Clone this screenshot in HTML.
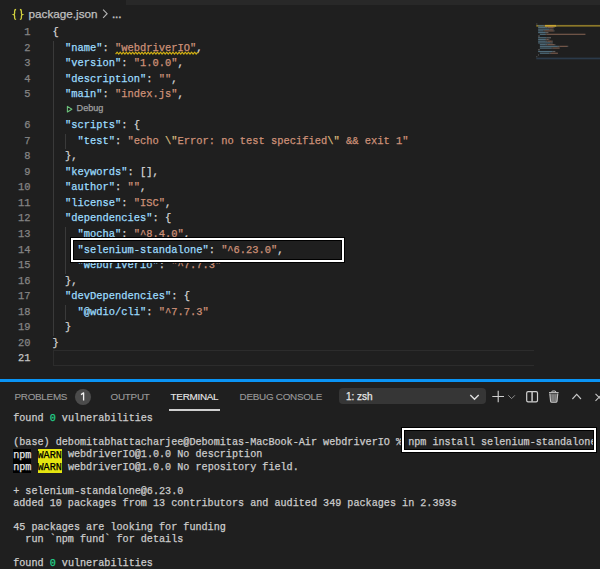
<!DOCTYPE html>
<html><head><meta charset="utf-8">
<style>
html,body{margin:0;padding:0;}
.code,.ln,.tl,#bc,.cl,#dd span{-webkit-text-stroke:0.25px currentColor;}
.tab{-webkit-text-stroke:0.12px currentColor;}
body{width:600px;height:569px;overflow:hidden;background:#1f1f1f;position:relative;font-family:"Liberation Sans",sans-serif;}
.abs{position:absolute;}
#tabstrip{position:absolute;left:125.5px;top:0;width:474.5px;height:4.5px;background:#282828;}
#bc{position:absolute;left:12px;top:6px;height:16px;line-height:16px;font-size:11.7px;color:#c0c0c0;white-space:nowrap;}
.bci{position:absolute;top:6px;height:16px;line-height:16px;font-size:11.6px;color:#cfcf45;font-family:"Liberation Sans",sans-serif;-webkit-text-stroke:0.4px currentColor;}
#bc .ic{color:#cbcb41;font-family:"Liberation Mono",monospace;font-size:11px;letter-spacing:-1px;}
.ln,.code,.cl{position:absolute;height:15.54px;line-height:15.54px;white-space:pre;}
.ln{left:0;width:30.5px;text-align:right;font-family:"Liberation Mono",monospace;font-size:10.42px;color:#858585;}
.ln.act{color:#c6c6c6;}
.code{left:52.5px;font-family:"Liberation Mono",monospace;font-size:10.42px;color:#d4d4d4;}
.k{color:#9cdcfe;}
.s{color:#ce9178;}
.p{color:#d4d4d4;}
.e{color:#d7ba7d;}

.cl{left:76.6px;font-size:9.1px;color:#a0a0a0;}
.tri{display:inline-block;width:0;height:0;border-left:5px solid #89d185;border-top:3px solid transparent;border-bottom:3px solid transparent;margin-right:4px;vertical-align:-1px;}
.guide{position:absolute;width:1px;background:#3a3a3a;}
#curline{position:absolute;left:52.5px;top:350.4px;width:490px;height:15.5px;box-sizing:border-box;border:1px solid #2c2c2c;border-right:none;}
#mmbg{position:absolute;left:533.5px;top:23px;width:66.5px;height:356px;background:#1f1f1f;}
#box1{position:absolute;left:70.7px;top:237.5px;width:273.8px;height:24.7px;box-sizing:border-box;border:2.5px solid #fff;box-shadow:inset 0 0 0 1px #000, 0 0 0 1px #000;}
#blue{position:absolute;left:0;top:379px;width:600px;height:3px;background:#0a94f5;}
.tab{position:absolute;top:389px;height:16px;line-height:16px;font-size:9.9px;letter-spacing:-0.28px;color:#9a9a9a;white-space:nowrap;}
.tab.act{color:#e8e8e8;}
#badge{position:absolute;left:75px;top:388.8px;width:16px;height:16px;border-radius:50%;background:#4b4b4b;box-shadow:0 0 0 0.6px #222;color:#e0e0e0;font-size:9.5px;text-align:center;line-height:15.7px;}
#tund{position:absolute;left:169px;top:409px;width:50.7px;height:1.5px;background:#d0d0d0;}
#dd{position:absolute;left:338.6px;top:388px;width:147.3px;height:16.4px;border-radius:4px;background:#363636;}
#dd span{position:absolute;left:7.3px;top:1.4px;line-height:16.4px;font-size:10px;color:#e6e6e6;}
.tl{position:absolute;left:13.2px;height:12.1px;line-height:12.1px;white-space:pre;font-family:"Liberation Mono",monospace;font-size:10.13px;color:#cccccc;}
.g{color:#23d18b;}
.bk{background:#000;color:#e5e5e5;display:inline-block;height:12.1px;vertical-align:top;position:relative;top:-0.8px;line-height:13.7px;}
.wn{background:#e5e510;color:#000;display:inline-block;height:12.1px;vertical-align:top;position:relative;top:-0.8px;line-height:13.7px;}
#box2{position:absolute;left:401.8px;top:428.3px;width:194.6px;height:23.3px;box-sizing:border-box;border:2.3px solid #fff;box-shadow:inset 0 0 0 1px #000, 0 0 0 1px #000;}
#minimap{position:absolute;left:536px;top:23px;width:64px;height:37px;}
</style></head><body>
<div id="tabstrip"></div>
<div id="bc" style="left:28.6px">package.json</div><div id="bc" style="left:111.9px;letter-spacing:-0.1px;-webkit-text-stroke:0.45px currentColor">...</div>
<div class="guide" style="left:52.8px;top:40.54px;height:295.26px"></div>
<div class="guide" style="left:65.2px;top:133.78px;height:15.54px"></div>
<div class="guide" style="left:65.2px;top:227.02px;height:46.62px"></div>
<div class="guide" style="left:65.2px;top:304.72px;height:15.54px"></div>
<div id="curline"></div>
<div class="ln" style="top:25.00px">1</div>
<div class="code" style="top:25.00px"><span class="p">{</span></div>
<div class="ln" style="top:40.54px">2</div>
<div class="code" style="top:40.54px">  <span class="k">"name"</span><span class="p">: </span><span class="s sq">"webdriverIO"</span><span class="p">,</span></div>
<div class="ln" style="top:56.08px">3</div>
<div class="code" style="top:56.08px">  <span class="k">"version"</span><span class="p">: </span><span class="s">"1.0.0"</span><span class="p">,</span></div>
<div class="ln" style="top:71.62px">4</div>
<div class="code" style="top:71.62px">  <span class="k">"description"</span><span class="p">: </span><span class="s">""</span><span class="p">,</span></div>
<div class="ln" style="top:87.16px">5</div>
<div class="code" style="top:87.16px">  <span class="k">"main"</span><span class="p">: </span><span class="s">"index.js"</span><span class="p">,</span></div>
<div class="cl" style="top:101.40px">Debug</div>
<div class="ln" style="top:118.24px">6</div>
<div class="code" style="top:118.24px">  <span class="k">"scripts"</span><span class="p">: {</span></div>
<div class="ln" style="top:133.78px">7</div>
<div class="code" style="top:133.78px">    <span class="k">"test"</span><span class="p">: </span><span class="s">"echo <span class="e">\"</span>Error: no test specified<span class="e">\"</span> &amp;&amp; exit 1"</span></div>
<div class="ln" style="top:149.32px">8</div>
<div class="code" style="top:149.32px">  <span class="p">},</span></div>
<div class="ln" style="top:164.86px">9</div>
<div class="code" style="top:164.86px">  <span class="k">"keywords"</span><span class="p">: [],</span></div>
<div class="ln" style="top:180.40px">10</div>
<div class="code" style="top:180.40px">  <span class="k">"author"</span><span class="p">: </span><span class="s">""</span><span class="p">,</span></div>
<div class="ln" style="top:195.94px">11</div>
<div class="code" style="top:195.94px">  <span class="k">"license"</span><span class="p">: </span><span class="s">"ISC"</span><span class="p">,</span></div>
<div class="ln" style="top:211.48px">12</div>
<div class="code" style="top:211.48px">  <span class="k">"dependencies"</span><span class="p">: {</span></div>
<div class="ln" style="top:227.02px">13</div>
<div class="code" style="top:227.02px">    <span class="k">"mocha"</span><span class="p">: </span><span class="s">"^8.4.0"</span><span class="p">,</span></div>
<div class="ln" style="top:242.56px">14</div>
<div class="code" style="top:242.56px">    <span class="k">"selenium-standalone"</span><span class="p">: </span><span class="s">"^6.23.0"</span><span class="p">,</span></div>
<div class="ln" style="top:258.10px">15</div>
<div class="code" style="top:258.10px">    <span class="k">"webdriverio"</span><span class="p">: </span><span class="s">"^7.7.3"</span></div>
<div class="ln" style="top:273.64px">16</div>
<div class="code" style="top:273.64px">  <span class="p">},</span></div>
<div class="ln" style="top:289.18px">17</div>
<div class="code" style="top:289.18px">  <span class="k">"devDependencies"</span><span class="p">: {</span></div>
<div class="ln" style="top:304.72px">18</div>
<div class="code" style="top:304.72px">    <span class="k">"@wdio/cli"</span><span class="p">: </span><span class="s">"^7.7.3"</span></div>
<div class="ln" style="top:320.26px">19</div>
<div class="code" style="top:320.26px">  <span class="p">}</span></div>
<div class="ln" style="top:335.80px">20</div>
<div class="code" style="top:335.80px"><span class="p">}</span></div>
<div class="ln act" style="top:351.34px">21</div>
<div class="code" style="top:351.34px"></div>
<div id="box1"></div>
<div id="mmbg"></div>
<div id="blue"></div>
<div class="tab" style="left:14.5px">PROBLEMS</div>
<div id="badge"></div>
<div class="tab" style="left:110.6px">OUTPUT</div>
<div class="tab act" style="left:170.6px">TERMINAL</div>
<div id="tund"></div>
<div class="tab" style="left:239.6px">DEBUG CONSOLE</div>
<div id="dd"><span>1: zsh</span></div>
<div class="tl" style="top:413.10px">found <span class="g">0</span> vulnerabilities</div>
<div class="tl" style="top:425.20px"></div>
<div class="tl" style="top:437.30px">(base) debomitabhattacharjee@Debomitas-MacBook-Air webdriverIO % npm install selenium-standalone</div>
<div class="tl" style="top:449.40px"><span class="bk">npm</span> <span class="wn">WARN</span> webdriverIO@1.0.0 No description</div>
<div class="tl" style="top:461.50px"><span class="bk">npm</span> <span class="wn">WARN</span> webdriverIO@1.0.0 No repository field.</div>
<div class="tl" style="top:473.60px"></div>
<div class="tl" style="top:485.70px">+ selenium-standalone@6.23.0</div>
<div class="tl" style="top:497.80px">added 10 packages from 13 contributors and audited 349 packages in 2.393s</div>
<div class="tl" style="top:509.90px"></div>
<div class="tl" style="top:522.00px">45 packages are looking for funding</div>
<div class="tl" style="top:534.10px">  run `npm fund` for details</div>
<div class="tl" style="top:546.20px"></div>
<div class="tl" style="top:558.30px">found <span class="g">0</span> vulnerabilities</div>
<div id="box2"></div>
<svg width="600" height="569" style="position:absolute;left:0;top:0">
<path d="M115.6 54.2 L117.15 52.1 L118.70 54.2 L120.25 52.1 L121.80 54.2 L123.35 52.1 L124.90 54.2 L126.45 52.1 L128.00 54.2 L129.55 52.1 L131.10 54.2 L132.65 52.1 L134.20 54.2 L135.75 52.1 L137.30 54.2 L138.85 52.1 L140.40 54.2 L141.95 52.1 L143.50 54.2 L145.05 52.1 L146.60 54.2 L148.15 52.1 L149.70 54.2 L151.25 52.1 L152.80 54.2 L154.35 52.1 L155.90 54.2 L157.45 52.1 L159.00 54.2 L160.55 52.1 L162.10 54.2 L163.65 52.1 L165.20 54.2 L166.75 52.1 L168.30 54.2 L169.85 52.1 L171.40 54.2 L172.95 52.1 L174.50 54.2 L176.05 52.1 L177.60 54.2 L179.15 52.1 L180.70 54.2 L182.25 52.1 L183.80 54.2 L185.35 52.1 L186.90 54.2 L188.45 52.1 L190.00 54.2 L191.55 52.1 L193.10 54.2 L194.65 52.1 L196.20 54.2 L197.75 52.1" stroke="#cfae12" stroke-width="1.1" fill="none" stroke-linejoin="round"/>
<path d="M67.4 106.4 L71.9 109.2 L67.4 112 Z" stroke="#6cc07a" stroke-width="1.1" fill="none" stroke-linejoin="round"/>
<path d="M81 394.6 L83.6 392.9 V400.4" stroke="#f2f2f2" stroke-width="1.3" fill="none" stroke-linejoin="round"/>
<path d="M16.1 9.5 Q14.6 9.5 14.6 11.2 V13.2 Q14.6 14.3 13.7 14.6 Q14.6 14.9 14.6 16.0 V17.9 Q14.6 19.4 16.1 19.4 M19.9 9.5 Q21.4 9.5 21.4 11.2 V13.2 Q21.4 14.3 22.3 14.6 Q21.4 14.9 21.4 16.0 V17.9 Q21.4 19.4 19.9 19.4" stroke="#d2d23e" stroke-width="1.3" fill="none"/>
<path d="M103.1 9.6 L107.1 13.7 L103.1 17.8" stroke="#b4b4b4" stroke-width="1.15" fill="none"/>
<path d="M470.3 395 L474.5 399.2 L478.7 395" stroke="#e0e0e0" stroke-width="1.4" fill="none"/>
<path d="M492.3 396.5 H504 M498.2 390.8 V402.2" stroke="#d0d0d0" stroke-width="1.1" fill="none"/>
<path d="M508.3 395.3 L511.6 398.6 L514.9 395.3" stroke="#9a9a9a" stroke-width="0.9" fill="none"/>
<rect x="526.7" y="391.6" width="10.8" height="10.2" rx="1.4" stroke="#d0d0d0" stroke-width="1.2" fill="none"/>
<path d="M532.1 391.6 V401.8" stroke="#c0c0c0" stroke-width="1.6" fill="none"/>
<path d="M549 392.6 H558.6 M551.5 392.4 L552.3 391 H555.3 L556.1 392.4" stroke="#c8c8c8" stroke-width="1" fill="none"/>
<path d="M549.8 393.5 L550.6 401.3 Q550.8 402.2 551.7 402.2 H555.9 Q556.8 402.2 557 401.3 L557.8 393.5" stroke="#c8c8c8" stroke-width="1.1" fill="#6a6a6a"/>
<path d="M552.3 394.5 V401 M553.8 394.5 V401 M555.3 394.5 V401" stroke="#9a9a9a" stroke-width="0.6"/>
<path d="M572.4 399 L576.7 394.4 L581 399" stroke="#c8c8c8" stroke-width="1.1" fill="none"/>
<path d="M595.5 393.8 L602.5 400.8 M602.5 393.8 L595.5 400.8" stroke="#c8c8c8" stroke-width="1.1" fill="none"/>
<rect x="536.3" y="24.92" width="64" height="1.72" fill="#8c7829"/><rect x="536.3" y="57.60" width="64" height="1.72" fill="#2b3a4a"/><rect x="536.40" y="23.40" width="0.86" height="1.2" fill="#5e5e5e"/><rect x="538.12" y="25.12" width="5.16" height="1.2" fill="#4f6b7a"/><rect x="543.28" y="25.12" width="1.72" height="1.2" fill="#5e5e5e"/><rect x="545.00" y="25.12" width="11.18" height="1.2" fill="#75584a"/><rect x="556.18" y="25.12" width="0.86" height="1.2" fill="#5e5e5e"/><rect x="538.12" y="26.84" width="7.74" height="1.2" fill="#4f6b7a"/><rect x="545.86" y="26.84" width="1.72" height="1.2" fill="#5e5e5e"/><rect x="547.58" y="26.84" width="6.02" height="1.2" fill="#75584a"/><rect x="553.60" y="26.84" width="0.86" height="1.2" fill="#5e5e5e"/><rect x="538.12" y="28.56" width="11.18" height="1.2" fill="#4f6b7a"/><rect x="549.30" y="28.56" width="1.72" height="1.2" fill="#5e5e5e"/><rect x="551.02" y="28.56" width="1.72" height="1.2" fill="#75584a"/><rect x="552.74" y="28.56" width="0.86" height="1.2" fill="#5e5e5e"/><rect x="538.12" y="30.28" width="5.16" height="1.2" fill="#4f6b7a"/><rect x="543.28" y="30.28" width="1.72" height="1.2" fill="#5e5e5e"/><rect x="545.00" y="30.28" width="8.60" height="1.2" fill="#75584a"/><rect x="553.60" y="30.28" width="0.86" height="1.2" fill="#5e5e5e"/><rect x="538.12" y="32.00" width="7.74" height="1.2" fill="#4f6b7a"/><rect x="545.86" y="32.00" width="2.58" height="1.2" fill="#5e5e5e"/><rect x="539.84" y="33.72" width="5.16" height="1.2" fill="#4f6b7a"/><rect x="545.00" y="33.72" width="1.72" height="1.2" fill="#5e5e5e"/><rect x="546.72" y="33.72" width="38.70" height="1.2" fill="#75584a"/><rect x="538.12" y="35.44" width="1.72" height="1.2" fill="#5e5e5e"/><rect x="538.12" y="37.16" width="8.60" height="1.2" fill="#4f6b7a"/><rect x="546.72" y="37.16" width="4.30" height="1.2" fill="#5e5e5e"/><rect x="538.12" y="38.88" width="6.88" height="1.2" fill="#4f6b7a"/><rect x="545.00" y="38.88" width="1.72" height="1.2" fill="#5e5e5e"/><rect x="546.72" y="38.88" width="1.72" height="1.2" fill="#75584a"/><rect x="548.44" y="38.88" width="0.86" height="1.2" fill="#5e5e5e"/><rect x="538.12" y="40.60" width="7.74" height="1.2" fill="#4f6b7a"/><rect x="545.86" y="40.60" width="1.72" height="1.2" fill="#5e5e5e"/><rect x="547.58" y="40.60" width="4.30" height="1.2" fill="#75584a"/><rect x="551.88" y="40.60" width="0.86" height="1.2" fill="#5e5e5e"/><rect x="538.12" y="42.32" width="12.04" height="1.2" fill="#4f6b7a"/><rect x="550.16" y="42.32" width="2.58" height="1.2" fill="#5e5e5e"/><rect x="539.84" y="44.04" width="6.02" height="1.2" fill="#4f6b7a"/><rect x="545.86" y="44.04" width="1.72" height="1.2" fill="#5e5e5e"/><rect x="547.58" y="44.04" width="6.88" height="1.2" fill="#75584a"/><rect x="554.46" y="44.04" width="0.86" height="1.2" fill="#5e5e5e"/><rect x="539.84" y="45.76" width="18.06" height="1.2" fill="#4f6b7a"/><rect x="557.90" y="45.76" width="1.72" height="1.2" fill="#5e5e5e"/><rect x="559.62" y="45.76" width="7.74" height="1.2" fill="#75584a"/><rect x="567.36" y="45.76" width="0.86" height="1.2" fill="#5e5e5e"/><rect x="539.84" y="47.48" width="11.18" height="1.2" fill="#4f6b7a"/><rect x="551.02" y="47.48" width="1.72" height="1.2" fill="#5e5e5e"/><rect x="552.74" y="47.48" width="6.88" height="1.2" fill="#75584a"/><rect x="538.12" y="49.20" width="1.72" height="1.2" fill="#5e5e5e"/><rect x="538.12" y="50.92" width="14.62" height="1.2" fill="#4f6b7a"/><rect x="552.74" y="50.92" width="2.58" height="1.2" fill="#5e5e5e"/><rect x="539.84" y="52.64" width="9.46" height="1.2" fill="#4f6b7a"/><rect x="549.30" y="52.64" width="1.72" height="1.2" fill="#5e5e5e"/><rect x="551.02" y="52.64" width="6.88" height="1.2" fill="#75584a"/><rect x="538.12" y="54.36" width="0.86" height="1.2" fill="#5e5e5e"/><rect x="536.40" y="56.08" width="0.86" height="1.2" fill="#5e5e5e"/><rect x="545.00" y="24.92" width="11.18" height="1.72" fill="#c8a532"/></svg>
</body></html>
